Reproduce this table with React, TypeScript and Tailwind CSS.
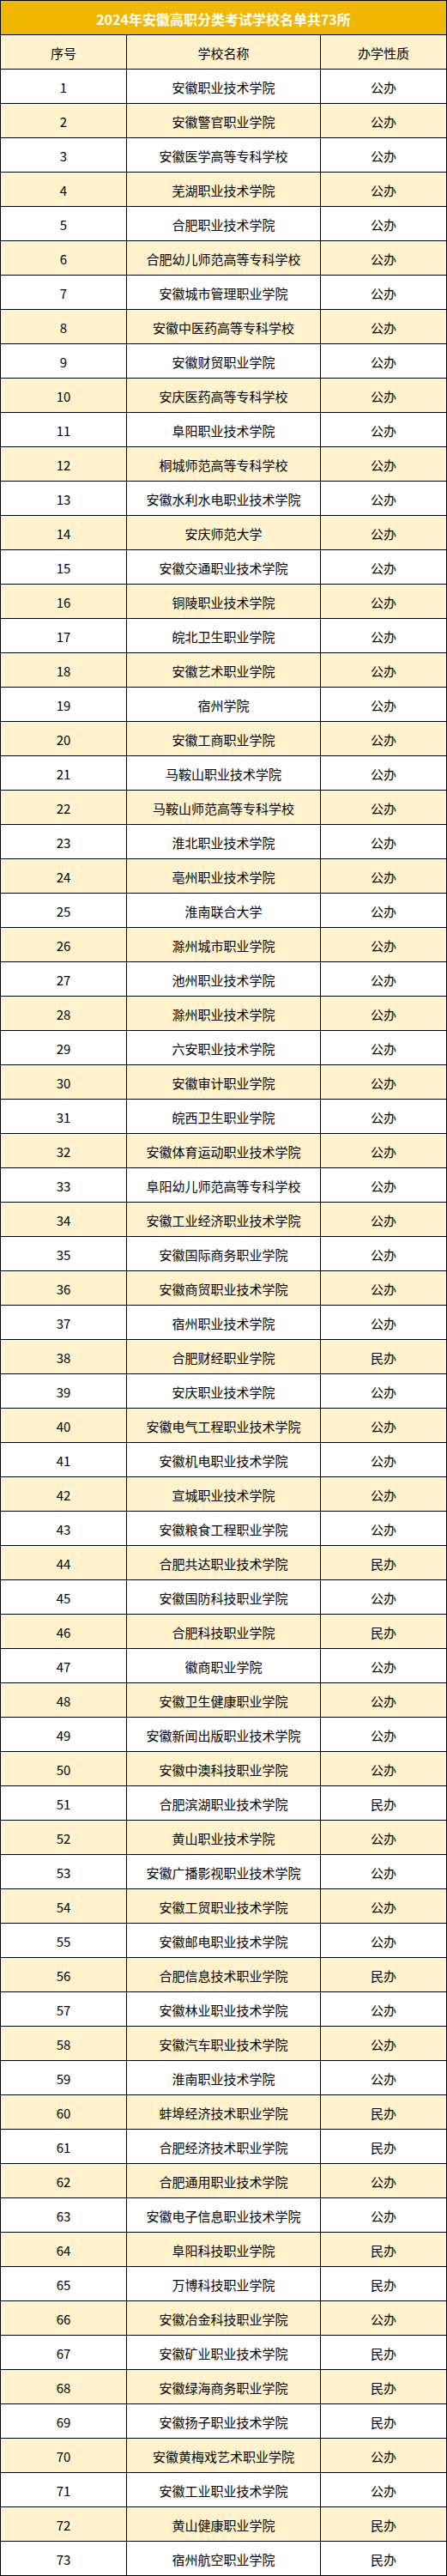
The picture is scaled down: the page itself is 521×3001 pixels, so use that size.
import React from "react";

const rows: [string, string][] = [
  ["安徽职业技术学院", "公办"],
  ["安徽警官职业学院", "公办"],
  ["安徽医学高等专科学校", "公办"],
  ["芜湖职业技术学院", "公办"],
  ["合肥职业技术学院", "公办"],
  ["合肥幼儿师范高等专科学校", "公办"],
  ["安徽城市管理职业学院", "公办"],
  ["安徽中医药高等专科学校", "公办"],
  ["安徽财贸职业学院", "公办"],
  ["安庆医药高等专科学校", "公办"],
  ["阜阳职业技术学院", "公办"],
  ["桐城师范高等专科学校", "公办"],
  ["安徽水利水电职业技术学院", "公办"],
  ["安庆师范大学", "公办"],
  ["安徽交通职业技术学院", "公办"],
  ["铜陵职业技术学院", "公办"],
  ["皖北卫生职业学院", "公办"],
  ["安徽艺术职业学院", "公办"],
  ["宿州学院", "公办"],
  ["安徽工商职业学院", "公办"],
  ["马鞍山职业技术学院", "公办"],
  ["马鞍山师范高等专科学校", "公办"],
  ["淮北职业技术学院", "公办"],
  ["亳州职业技术学院", "公办"],
  ["淮南联合大学", "公办"],
  ["滁州城市职业学院", "公办"],
  ["池州职业技术学院", "公办"],
  ["滁州职业技术学院", "公办"],
  ["六安职业技术学院", "公办"],
  ["安徽审计职业学院", "公办"],
  ["皖西卫生职业学院", "公办"],
  ["安徽体育运动职业技术学院", "公办"],
  ["阜阳幼儿师范高等专科学校", "公办"],
  ["安徽工业经济职业技术学院", "公办"],
  ["安徽国际商务职业学院", "公办"],
  ["安徽商贸职业技术学院", "公办"],
  ["宿州职业技术学院", "公办"],
  ["合肥财经职业学院", "民办"],
  ["安庆职业技术学院", "公办"],
  ["安徽电气工程职业技术学院", "公办"],
  ["安徽机电职业技术学院", "公办"],
  ["宣城职业技术学院", "公办"],
  ["安徽粮食工程职业学院", "公办"],
  ["合肥共达职业技术学院", "民办"],
  ["安徽国防科技职业学院", "公办"],
  ["合肥科技职业学院", "民办"],
  ["徽商职业学院", "公办"],
  ["安徽卫生健康职业学院", "公办"],
  ["安徽新闻出版职业技术学院", "公办"],
  ["安徽中澳科技职业学院", "公办"],
  ["合肥滨湖职业技术学院", "民办"],
  ["黄山职业技术学院", "公办"],
  ["安徽广播影视职业技术学院", "公办"],
  ["安徽工贸职业技术学院", "公办"],
  ["安徽邮电职业技术学院", "公办"],
  ["合肥信息技术职业学院", "民办"],
  ["安徽林业职业技术学院", "公办"],
  ["安徽汽车职业技术学院", "公办"],
  ["淮南职业技术学院", "公办"],
  ["蚌埠经济技术职业学院", "民办"],
  ["合肥经济技术职业学院", "民办"],
  ["合肥通用职业技术学院", "公办"],
  ["安徽电子信息职业技术学院", "公办"],
  ["阜阳科技职业学院", "民办"],
  ["万博科技职业学院", "民办"],
  ["安徽冶金科技职业学院", "公办"],
  ["安徽矿业职业技术学院", "民办"],
  ["安徽绿海商务职业学院", "民办"],
  ["安徽扬子职业技术学院", "民办"],
  ["安徽黄梅戏艺术职业学院", "公办"],
  ["安徽工业职业技术学院", "公办"],
  ["黄山健康职业学院", "民办"],
  ["宿州航空职业学院", "民办"],
];

function Row({ a, b, c, shaded }: { a: string; b: string; c: string; shaded: boolean }) {
  return (
    <div
      className={`grid h-[40px] grid-cols-[148px_226px_147px] border-b border-black text-[15px] leading-none text-black ${
        shaded ? "bg-[#fff2cc]" : "bg-white"
      }`}
    >
      <div className="flex items-center justify-center border-l border-r border-black pt-[2px]">{a}</div>
      <div className="flex items-center justify-center border-r border-black pt-[2px]">{b}</div>
      <div className="flex items-center justify-center border-r border-black pt-[2px]">{c}</div>
    </div>
  );
}

export default function App() {
  return (
    <div className="w-[521px] bg-white font-['Noto_Sans_CJK_SC','Noto_Sans_CJK_SC',sans-serif]">
      <div className="flex h-[41px] items-center justify-center border border-black bg-[#f2b705] pt-[2px] text-[16px] font-bold leading-none text-white">
        2024年安徽高职分类考试学校名单共73所
      </div>
      <Row a="序号" b="学校名称" c="办学性质" shaded={true} />
      {rows.map(([name, type], i) => (
        <Row key={i} a={String(i + 1)} b={name} c={type} shaded={i % 2 === 1} />
      ))}
    </div>
  );
}
